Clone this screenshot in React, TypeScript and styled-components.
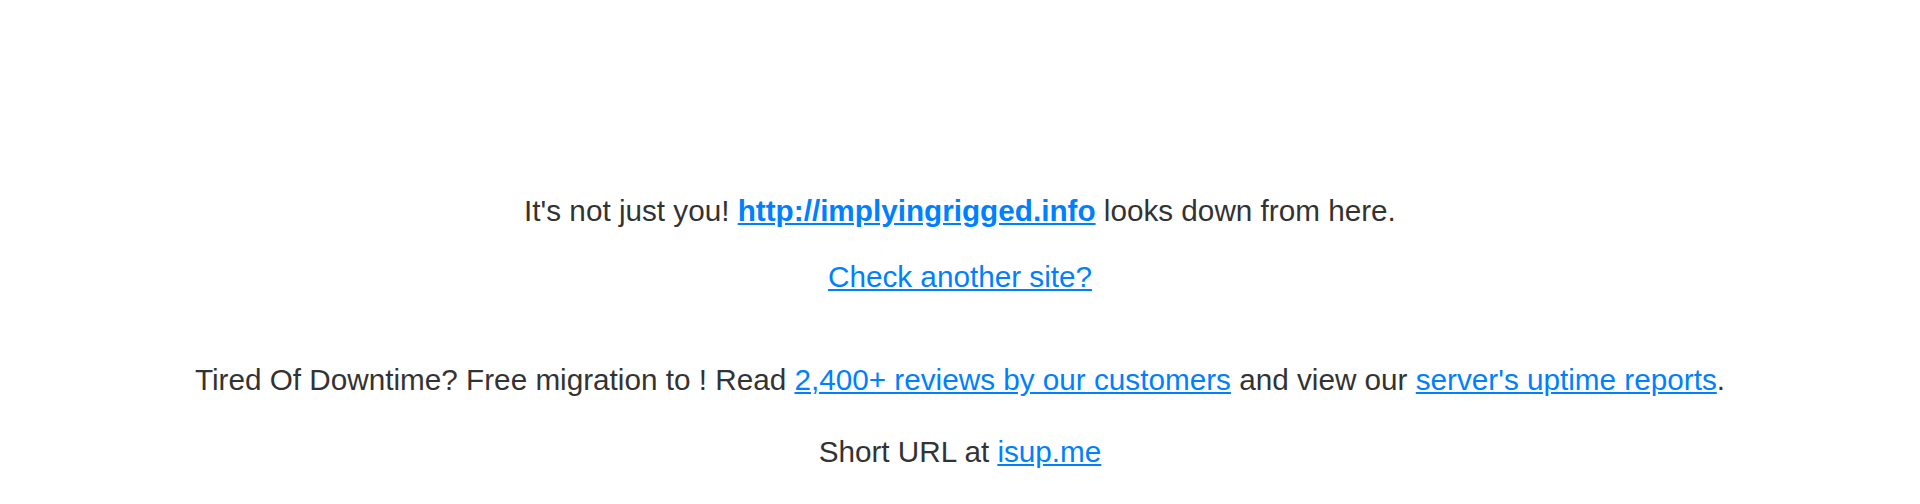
import React from "react";
import { styled, createGlobalStyle } from "styled-components";

const GlobalStyle = createGlobalStyle`
  html, body {
    margin: 0;
    padding: 0;
    background: #ffffff;
  }
  body {
    font-family: "Liberation Sans", Arial, sans-serif;
    color: #333333;
  }
`;

const App = () => {
  return (
    <>
      <GlobalStyle />
      <Container>
        <Status>
          It's not just you! <SiteLink href="#">http://implyingrigged.info</SiteLink> looks down
          from here.
        </Status>
        <Line $gap={26}>
          <Link href="#">Check another site?</Link>
        </Line>
        <Line $gap={63}>
          Tired Of Downtime? Free migration to ! Read{" "}
          <Link href="#">2,400+ reviews by our customers</Link> and view our{" "}
          <Link href="#">server's uptime reports</Link>.
        </Line>
        <Line $gap={32}>
          Short URL at <Link href="#">isup.me</Link>
        </Line>
      </Container>
    </>
  );
};

export default App;

const Container = styled.div`
  display: flex;
  flex-direction: column;
  align-items: center;
  padding-top: 191px;
  font-size: 29.7px;
  line-height: 40px;
  text-align: center;
`;

const Status = styled.p`
  margin: 0;
`;

const Line = styled.p<{ $gap: number }>`
  margin: ${(p) => p.$gap}px 0 0;
`;

const Link = styled.a`
  color: #0080ff;
  text-decoration: underline;
`;

const SiteLink = styled(Link)`
  font-weight: bold;
`;
